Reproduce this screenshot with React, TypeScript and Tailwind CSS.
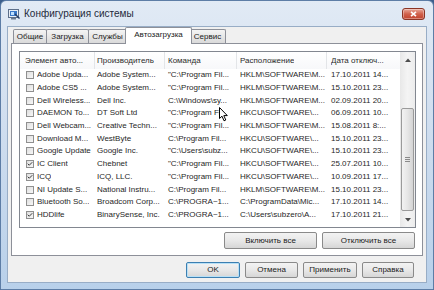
import { Check } from "lucide-react";

type Row = {
  on: boolean;
  name: string;
  vendor: string;
  cmd: string;
  loc: string;
  date: string;
};

const rows: Row[] = [
  { on: false, name: "Adobe Upda...", vendor: "Adobe System...", cmd: "\"C:\\Program Fil...", loc: "HKLM\\SOFTWARE\\M...", date: "17.10.2011 14..." },
  { on: false, name: "Adobe CS5 ...", vendor: "Adobe System...", cmd: "\"C:\\Program Fil...", loc: "HKLM\\SOFTWARE\\M...", date: "15.10.2011 23..." },
  { on: false, name: "Dell Wireless...", vendor: "Dell Inc.", cmd: "C:\\Windows\\sy...", loc: "HKLM\\SOFTWARE\\M...", date: "02.09.2011 20..." },
  { on: false, name: "DAEMON To...", vendor: "DT Soft Ltd", cmd: "\"C:\\Program Fi...", loc: "HKCU\\SOFTWARE\\...", date: "06.09.2011 10..." },
  { on: false, name: "Dell Webcam...", vendor: "Creative Techn...", cmd: "\"C:\\Program Fil...", loc: "HKLM\\SOFTWARE\\M...", date: "15.08.2011 8:..." },
  { on: false, name: "Download M...", vendor: "WestByte", cmd: "C:\\Program Fil...", loc: "HKCU\\SOFTWARE\\...", date: "15.10.2011 23..." },
  { on: false, name: "Google Update", vendor: "Google Inc.", cmd: "\"C:\\Users\\subz...", loc: "HKCU\\SOFTWARE\\...", date: "15.10.2011 23..." },
  { on: true, name: "IC Client", vendor: "Chebnet", cmd: "\"C:\\Program Fil...", loc: "HKCU\\SOFTWARE\\...", date: "25.07.2011 10..." },
  { on: true, name: "ICQ", vendor: "ICQ, LLC.", cmd: "\"C:\\Program Fil...", loc: "HKCU\\SOFTWARE\\...", date: "10.09.2011 17..." },
  { on: false, name: "NI Update S...", vendor: "National Instru...", cmd: "C:\\Program Fil...", loc: "HKLM\\SOFTWARE\\M...", date: "15.10.2011 23..." },
  { on: false, name: "Bluetooth So...", vendor: "Broadcom Corp...", cmd: "C:\\PROGRA~1...", loc: "C:\\ProgramData\\Mic...", date: "17.10.2011 14..." },
  { on: true, name: "HDDlife", vendor: "BinarySense, Inc.", cmd: "C:\\PROGRA~1...", loc: "C:\\Users\\subzero\\A...", date: "17.10.2011 21..." },
];

function Tab({ label, width }: { label: string; width: string }) {
  return (
    <div
      className={`-ml-px mt-[2px] flex h-[14px] items-center justify-center rounded-t-[2px] border border-b-0 border-[#8d9099] bg-gradient-to-b from-[#f4f4f4] to-[#dadada] text-[#1a1a1a] ${width}`}
    >
      {label}
    </div>
  );
}

function Button({ label, width, focused }: { label: string; width: string; focused?: boolean }) {
  return (
    <div
      className={`flex items-center justify-center rounded-[2px] border bg-gradient-to-b from-[#f3f3f3] via-[#e8e8e8] to-[#d6d6d6] text-[#1a1a1a] ${width} ${
        focused ? "border-[#3c7fb1] shadow-[inset_0_0_0_1px_#b8e0f6]" : "border-[#8a8a8a]"
      }`}
    >
      {label}
    </div>
  );
}

function CheckBox({ on }: { on: boolean }) {
  return (
    <div className="flex h-[8px] w-[8px] shrink-0 items-center justify-center border border-[#8f8f8f] bg-gradient-to-br from-[#dedede] to-[#f7f7f7]">
      {on && <Check className="h-[8px] w-[8px] text-[#222]" strokeWidth={3.5} />}
    </div>
  );
}

export default function App() {
  return (
    <div className="relative h-[290px] w-[434px] overflow-hidden bg-[#3d5f8c] font-['Liberation_Sans',Arial,sans-serif] text-[8px] leading-none">
      <div className="flex h-full flex-col rounded-t-[6px] border border-[#5d7da6] bg-gradient-to-b from-[#e1eaf5] via-[#cddcee] to-[#b8d0ea] px-[6px] pb-[6px]">
        {/* title bar */}
        <div className="flex h-[25px] items-center pl-[1px] pr-[2px]">
          <svg width="12" height="12" viewBox="0 0 12 12" className="mr-[4px]">
            <rect x="0.5" y="1.5" width="10" height="8" fill="#e8eef6" stroke="#5c6f8a" />
            <rect x="2" y="3" width="7" height="5" fill="#3a78c8" />
            <rect x="3" y="4" width="3" height="3" fill="#bfe0ff" />
            <rect x="3" y="10" width="5" height="1.5" fill="#6b7a8f" />
            <path d="M7 6 L11.5 10.5" stroke="#243d66" strokeWidth="1.4" />
          </svg>
          <span className="text-[10px] text-[#1e2a3a]">Конфигурация системы</span>
          <div className="flex-1" />
          <div className="flex h-[12px] w-[23px] items-center justify-center rounded-[3px] border border-[#8b3424] bg-gradient-to-b from-[#e9a89a] via-[#d0604b] to-[#c2422c] shadow-[inset_0_0_0_1px_rgba(255,255,255,0.35)]">
            <svg width="7" height="6" viewBox="0 0 7 6">
              <path d="M1 0.8 L6 5.2 M6 0.8 L1 5.2" stroke="#fff" strokeWidth="1.6" />
            </svg>
          </div>
        </div>

        {/* client area */}
        <div className="flex flex-1 flex-col border border-[#98adc6] bg-[#f0f0f0] px-[3px]">
          {/* tabs */}
          <div className="flex h-[16px] pl-[3px]">
            <Tab label="Общие" width="w-[34px]" />
            <Tab label="Загрузка" width="w-[43px]" />
            <Tab label="Службы" width="w-[39px]" />
            <div className="relative z-10 -mx-[2px] -mb-px flex h-[17px] w-[67px] items-center justify-center rounded-t-[2px] border border-b-0 border-[#8d9099] bg-white pb-[2px] text-[#1a1a1a]">
              Автозагрузка
            </div>
            <Tab label="Сервис" width="w-[37px]" />
          </div>

          {/* tab panel */}
          <div className="flex h-[213px] flex-col border border-[#8d9099] bg-white pb-[6px] pl-[7px] pr-[6px] pt-[7px]">
            <div className="flex h-[177px] border border-[#828790] bg-white text-[#1f1f1f]">
              <div className="flex flex-1 flex-col overflow-hidden">
                {/* header */}
                <div className="flex h-[17px] shrink-0 items-center bg-gradient-to-b from-white to-[#f7f8fa] text-[#2b2b2b]">
                  <div className="flex h-full w-[75px] items-center border-r border-[#e3e5e8] pl-[5px]">
                    <span className="truncate">Элемент авто...</span>
                  </div>
                  <div className="flex h-full w-[70px] items-center border-r border-[#e3e5e8] pl-[2px]">
                    <span className="truncate">Производитель</span>
                  </div>
                  <div className="flex h-full w-[72px] items-center border-r border-[#e3e5e8] pl-[3px]">
                    <span className="truncate">Команда</span>
                  </div>
                  <div className="flex h-full w-[90px] items-center border-r border-[#e3e5e8] pl-[3px]">
                    <span className="truncate">Расположение</span>
                  </div>
                  <div className="flex h-full w-[72px] items-center pl-[4px]">
                    <span className="truncate">Дата отключ...</span>
                  </div>
                </div>
                {/* rows */}
                {rows.map((r) => (
                  <div key={r.name} className="flex h-[12.7px] shrink-0 items-center whitespace-nowrap">
                    <div className="flex w-[75px] items-center gap-[3px] overflow-hidden pl-[6px]">
                      <CheckBox on={r.on} />
                      <span className="truncate">{r.name}</span>
                    </div>
                    <div className="w-[70px] truncate pl-[2px]">{r.vendor}</div>
                    <div className="w-[72px] truncate pl-[3px]">{r.cmd}</div>
                    <div className="w-[90px] truncate pl-[3px]">{r.loc}</div>
                    <div className="w-[72px] truncate pl-[4px]">{r.date}</div>
                  </div>
                ))}
              </div>

              {/* scrollbar */}
              <div className="flex w-[15px] shrink-0 flex-col bg-gradient-to-r from-[#e8e8e8] via-[#f4f4f4] to-[#ececec]">
                <div className="flex h-[15px] items-center justify-center">
                  <svg width="6" height="4" viewBox="0 0 6 4">
                    <path d="M0 4 L3 0.5 L6 4 Z" fill="#4d4d4d" />
                  </svg>
                </div>
                <div className="flex-1 px-[1px]">
                  <div className="mt-[41px] flex h-[103px] flex-col items-center justify-center gap-[1px] rounded-[2px] border border-[#9a9a9a] bg-gradient-to-r from-[#f2f2f2] via-[#e6e6e6] to-[#d4d4d4]">
                    <div className="h-px w-[5px] bg-[#8a8a8a]" />
                    <div className="h-px w-[5px] bg-[#8a8a8a]" />
                    <div className="h-px w-[5px] bg-[#8a8a8a]" />
                  </div>
                </div>
                <div className="flex h-[14px] items-center justify-center">
                  <svg width="6" height="4" viewBox="0 0 6 4">
                    <path d="M0 0 L3 3.5 L6 0 Z" fill="#4d4d4d" />
                  </svg>
                </div>
              </div>
            </div>

            <div className="mt-[4px] flex h-[17px] justify-end gap-[5px] pr-[1px]">
              <Button label="Включить все" width="w-[93px]" />
              <Button label="Отключить все" width="w-[93px]" />
            </div>
          </div>

          {/* dialog buttons */}
          <div className="mt-[6px] flex h-[16px] justify-end gap-[5px] pr-[9px]">
            <Button label="OK" width="w-[54px]" focused />
            <Button label="Отмена" width="w-[53px]" />
            <Button label="Применить" width="w-[54px]" />
            <Button label="Справка" width="w-[52px]" />
          </div>
        </div>
      </div>

      {/* mouse pointer */}
      <svg width="10" height="15" viewBox="0 0 10 15" className="absolute left-[219px] top-[107px]">
        <path d="M0.5 0.5 L0.5 11.5 L3 9.2 L5 13.8 L6.8 13 L4.8 8.6 L8.3 8.6 Z" fill="#fff" stroke="#000" strokeWidth="1" strokeLinejoin="round" />
      </svg>
    </div>
  );
}
